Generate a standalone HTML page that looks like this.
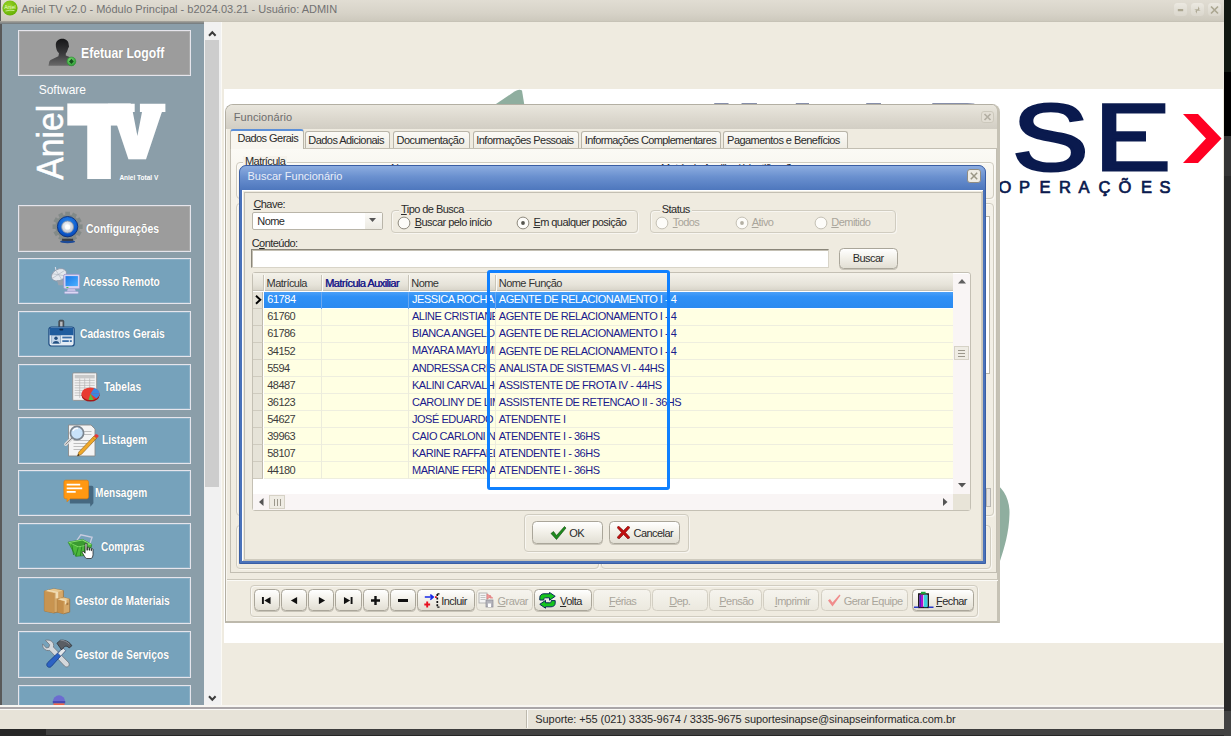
<!DOCTYPE html>
<html lang="pt-BR"><head><meta charset="utf-8"><title>Aniel TV v2.0 - Módulo Principal</title>
<style>
html,body{margin:0;padding:0;background:#2b2b2b;}
body{width:1231px;height:736px;overflow:hidden;position:relative;font-family:"Liberation Sans",sans-serif;}
#root{position:absolute;left:0;top:0;width:1231px;height:736px;overflow:hidden;background:#2a2a2a;}
#root div,#root span,#root svg{position:absolute;box-sizing:border-box;}
#root span.t{white-space:nowrap;line-height:1;}
/* generic text styles */
.ms{font:11px "Liberation Sans",sans-serif;letter-spacing:-0.55px;color:#2a2a2a;white-space:nowrap;line-height:13px;}
.sg{font:11px "Liberation Sans",sans-serif;white-space:nowrap;line-height:13px;}
u{text-decoration:underline;text-underline-offset:1px;}
/* title bar */
#tb{left:0;top:0;width:1224.2px;height:22px;background:linear-gradient(#e1ddd3 0,#d7d3c8 13px,#cdc9bd 21px,#c0bcb0 22px);}
#tbsh{left:0;top:21.3px;width:204px;height:2.7px;background:linear-gradient(#aaa69c,#70787d);}
#tb .sg{left:21.2px;top:4px;color:#727272;}
.wb{top:2.6px;width:12.8px;height:13.8px;border-radius:3.5px;background:linear-gradient(#ece9e1,#e2dfd6 50%,#dbd7cd);}
/* left edge */
#ledge{left:0;top:22px;width:2px;height:683px;background:#595959;}
#ledge0{left:0;top:0;width:1.2px;height:24px;background:#5c5c5c;}
/* sidebar */
#sb{left:2px;top:22px;width:202px;height:683px;background:#8b9ea9;overflow:hidden;}
.sbtn{border:1.6px solid #e6e5ec;background:#76a2bb;box-shadow:inset 0 0 0 1px rgba(255,255,255,.15);}
.sbtn.gray{background:#9c9c9c;}
.sbt{font:bold 12.5px "Liberation Sans",sans-serif;color:#fff;transform-origin:0 50%;text-shadow:0 0 1px rgba(70,70,70,.4);}
/* sidebar scroll */
#ss{left:204px;top:22px;width:17px;height:683px;background:#f1f1f1;}
#ss .th{left:1.2px;top:18px;width:13.8px;height:447px;background:#cdcdcd;}
/* main */
#main{left:221px;top:22px;width:1003px;height:683px;background:#efebe0;border-left:1px solid #fbfaf6;}
#white{left:224px;top:89px;width:999px;height:554px;background:#fff;overflow:hidden;}
/* status */
#st{left:0;top:705px;width:1224.2px;height:24px;background:linear-gradient(#f8f6f2 0,#f8f6f2 1.7px,#aaa6a8 2.1px,#aaa6a8 3.6px,#fbfaf7 3.9px,#fbfaf7 4.7px,#e7e3d8 5px);}
#st .sep{left:526px;top:5px;width:1px;height:18px;background:#bdb9ad;box-shadow:1px 0 0 #fbfaf6;}
#st .sg{left:535.3px;top:8.8px;color:#2a2a2a;letter-spacing:-.08px;}
/* windows */
.win{left:0;top:0;width:1231px;height:736px;}
#fw{background:#efebe0;border-radius:8px 8px 0 0;border:1px solid #b3afa3;border-right:3px solid #c6c2b5;border-bottom:2px solid #bdb9ac;box-shadow:inset 1px 1px 0 #f8f6f0;overflow:hidden;}
#fw .tt{left:0;top:0;width:100%;height:24px;background:linear-gradient(#e9e6dd,#dcd8ce 55%,#d2cec4);}
.tab{border:1px solid #b9b5a9;border-bottom:none;border-radius:3px 3px 0 0;background:linear-gradient(#fbfaf6,#efece3);}
.tab.on{background:#f8f6f0;border-top:2px solid #5b8fd8;}
#tp{background:linear-gradient(#fbfaf5,#f4f1e9 12%,#efebe0 100%);border:1px solid #c2beb2;}
.gb{border:1px solid #d0ccc0;border-radius:4px;box-shadow:inset 1px 1px 0 rgba(255,255,255,.55),1px 1px 0 rgba(255,255,255,.55);}
.btn{border:1px solid #aaa69a;border-radius:4.5px;background:linear-gradient(#ffffff,#f3f1ea 45%,#e2dfd4);box-shadow:0 1px 0 #c8c4b8;}
.btn.dis{border-color:#d3cfc3;background:linear-gradient(#f6f4ee,#ece9df);box-shadow:none;}
.ms.dt{color:#a9a59b;}
.ms.w{color:#fff;letter-spacing:-0.47px;}
.ms.nv{color:#1a1a8c;letter-spacing:-0.47px;}
/* Buscar dialog */
#bw{background:#4a72ba;border-radius:7px 7px 0 0;overflow:hidden;border:1px solid #3a5ea4;}
#bw .tt{left:0;top:0;width:100%;height:24px;background:linear-gradient(#8dade0,#6a90cf 45%,#4e77bd);}
#bw .cl{left:2px;top:24px;right:2px;bottom:2px;background:#efebe0;box-shadow:inset 1px 1px 0 #fff,inset -1px -1px 0 #c9c5b9;}
.combo{background:#fff;border:1px solid #b9b5a9;border-radius:2px;}
.combo .dd{right:0;top:0;width:17px;height:100%;background:linear-gradient(#fbfaf7,#eceae2);}
.edit{background:#fff;border:1px solid #8a867a;border-right-color:#d8d4c8;border-bottom-color:#d8d4c8;box-shadow:inset 1px 1px 0 #c4c0b4;}
#grid{background:#fff;border:1px solid #c4c0b4;border-radius:3px;}
.gh{background:linear-gradient(#f4f2ea,#e6e3d9 70%,#d9d5ca);border-bottom:1px solid #c4c0b4;}
.gi{background:#e6e3d8;border-bottom:1px solid #cfcbbf;border-right:1px solid #bdb9ad;}
.gr{background:#ffffe3;border-bottom:1px solid #eeeedf;}
.gr.sel{background:linear-gradient(#4ba0f8,#2f90f6 30%,#2b8af0);border-bottom-color:#fff;}
.clip{overflow:hidden;}
.sc{background:#f9f5f5;}
.sth{background:#efece4;border:1px solid #d6d2c6;}

</style></head><body>
<div id="root">
<div id="tb">
<svg style="left:2px;top:.4px" width="16" height="16" viewBox="0 0 16 16"><defs><radialGradient id="gi" cx=".4" cy=".35" r=".7"><stop offset="0" stop-color="#9ad428"/><stop offset="1" stop-color="#62ae02"/></radialGradient></defs><circle cx="8" cy="8" r="7.6" fill="url(#gi)"/><text x="8" y="8.6" font-family="Liberation Sans,sans-serif" font-size="5.2" fill="#eaffd0" text-anchor="middle">Aniel</text><path d="M3.5 11 Q8 9.6 12.5 10.6" stroke="#d8f5a8" stroke-width=".8" fill="none"/></svg>
<span class="t sg">Aniel TV v2.0 - Módulo Principal - b2024.03.21 - Usuário: ADMIN</span>
<div class="wb" style="left:1174.100px"><svg width="13" height="14" viewBox="0 0 13 14" style="left:0;top:0"><rect x="3.800" y="5.900" width="5.400" height="2.300" rx=".5" fill="#aca792"/></svg></div>
<div class="wb" style="left:1190.900px"><svg width="13" height="14" viewBox="0 0 13 14" style="left:0;top:0"><path d="M7.500 3.200 L8.600 6.300 L6.800 7 Z M5.500 10.800 L4.400 7.700 L6.200 7 Z M3.200 6.600 L6.500 6.200 L6.500 7.800 Z M9.800 7.400 L6.500 7.800 L6.500 6.200 Z" fill="#aca792"/></svg></div>
<div class="wb" style="left:1207.900px"><svg width="13" height="14" viewBox="0 0 13 14" style="left:0;top:0"><path d="M3 3.500 L10 10.500 M10 3.500 L3 10.500" stroke="#aca792" stroke-width="1.700"/></svg></div>
</div>
<div id="ledge"></div><div id="ledge0"></div>

<div id="sb"></div>
<div class="sbtn gray" style="left:17.7px;top:29.5px;width:173.6px;height:46.7px"></div>
<span class="t sbt" style="left:81px;top:45.65px;font-size:14px;transform:scaleX(0.871)">Efetuar Logoff</span>
<div class="sbtn gray" style="left:17.7px;top:205px;width:173.6px;height:46.5px"></div>
<span class="t sbt" style="left:85.5px;top:223.12px;font-size:12.5px;transform:scaleX(0.835)">Configurações</span>
<div class="sbtn" style="left:17.7px;top:258.2px;width:173.6px;height:46.1px"></div>
<span class="t sbt" style="left:82.8px;top:276.02px;font-size:12.5px;transform:scaleX(0.813)">Acesso Remoto</span>
<div class="sbtn" style="left:17.7px;top:310.8px;width:173.6px;height:46.4px"></div>
<span class="t sbt" style="left:79.8px;top:328.22px;font-size:12.5px;transform:scaleX(0.819)">Cadastros Gerais</span>
<div class="sbtn" style="left:17.7px;top:363.8px;width:173.6px;height:46.7px"></div>
<span class="t sbt" style="left:103.5px;top:381.12px;font-size:12.5px;transform:scaleX(0.813)">Tabelas</span>
<div class="sbtn" style="left:17.7px;top:417px;width:173.6px;height:46.5px"></div>
<span class="t sbt" style="left:102px;top:434.22px;font-size:12.5px;transform:scaleX(0.820)">Listagem</span>
<div class="sbtn" style="left:17.7px;top:469.8px;width:173.6px;height:46.2px"></div>
<span class="t sbt" style="left:95.4px;top:486.92px;font-size:12.5px;transform:scaleX(0.808)">Mensagem</span>
<div class="sbtn" style="left:17.7px;top:523.2px;width:173.6px;height:46.3px"></div>
<span class="t sbt" style="left:100.9px;top:541.02px;font-size:12.5px;transform:scaleX(0.801)">Compras</span>
<div class="sbtn" style="left:17.7px;top:577px;width:173.6px;height:47px"></div>
<span class="t sbt" style="left:75.2px;top:594.62px;font-size:12.5px;transform:scaleX(0.817)">Gestor de Materiais</span>
<div class="sbtn" style="left:17.7px;top:631px;width:173.6px;height:47px"></div>
<span class="t sbt" style="left:75px;top:649.02px;font-size:12.5px;transform:scaleX(0.825)">Gestor de Serviços</span>
<div class="sbtn" style="left:17.7px;top:685px;width:173.6px;height:21px;border-bottom:none"></div>
<svg id="sbi" style="left:0;top:22px" width="204" height="683" viewBox="0 22 204 683"><defs>
<linearGradient id="pg" x1="0" y1="0" x2="0" y2="1"><stop offset="0" stop-color="#151517"/><stop offset=".55" stop-color="#3a3a3c"/><stop offset="1" stop-color="#6a6a6a"/></linearGradient>
<radialGradient id="gg" cx=".4" cy=".35" r=".7"><stop offset="0" stop-color="#7ad870"/><stop offset="1" stop-color="#2a9a34"/></radialGradient>
<radialGradient id="cb" cx=".5" cy=".35" r=".75"><stop offset="0" stop-color="#2a8cf0"/><stop offset=".7" stop-color="#0a55c8"/><stop offset="1" stop-color="#083a90"/></radialGradient>
<radialGradient id="kn" cx=".45" cy=".4" r=".6"><stop offset="0" stop-color="#ffffff"/><stop offset="1" stop-color="#b8c0cc"/></radialGradient>
<linearGradient id="scr" x1="0" y1="0" x2="1" y2="1"><stop offset="0" stop-color="#1a78e8"/><stop offset="1" stop-color="#4ab0ff"/></linearGradient>
</defs>
<!-- logoff person -->
<g transform="translate(48,38)">
<path d="M14.300 .8c3.800 0 6.400 2.400 6.400 6 0 .8.500 1 .3 1.800-.3 1.300-.9 1.500-1.200 2.800-.5 2-1.300 3.200-2 4v2l5 2.200c1.500.7 2.200 1.600 2.400 3.400l.6 4.800H.5l.6-3.300c.3-1.500 1-2.400 2.500-3.100l6.800-3.200.6-3c-1.300-1-2.300-2.600-2.700-4.700-.3-1.200-.5-2.400-.5-3.700C7.800 3.200 10.500.8 14.300.8z" fill="url(#pg)"/>
<circle cx="23.400" cy="23.400" r="4.400" fill="url(#gg)" stroke="#2a9030" stroke-width=".6"/><path d="M23.400 20.800l2.400 2.600-2.400 2.600-2.400-2.600z" fill="#14501c"/>
</g>
<!-- config gear -->
<g transform="translate(67.600,226.700)">
<g fill="#7e8684" opacity=".8"><circle r="12.300"/><g><rect x="-2.300" y="-15" width="4.600" height="30"/><rect x="-2.300" y="-15" width="4.600" height="30" transform="rotate(30)"/><rect x="-2.300" y="-15" width="4.600" height="30" transform="rotate(60)"/><rect x="-2.300" y="-15" width="4.600" height="30" transform="rotate(90)"/><rect x="-2.300" y="-15" width="4.600" height="30" transform="rotate(120)"/><rect x="-2.300" y="-15" width="4.600" height="30" transform="rotate(150)"/></g></g>
<ellipse cx="0" cy="15" rx="7.500" ry="1.600" fill="#1c4a98"/><rect x="-5.500" y="12" width="11" height="2.200" fill="#3a3e44"/>
<circle r="10.200" fill="url(#cb)" stroke="#0a2f78" stroke-width=".9"/>
<circle cy=".3" r="6" fill="url(#kn)" stroke="#8a94a4" stroke-width=".8"/><circle cy=".3" r="2.600" fill="#fff" opacity=".9"/>
</g>
<!-- acesso remoto -->
<g transform="translate(50.900,266.800)">
<path d="M4.400 .2l.8 4" stroke="#e8e8f0" stroke-width=".9"/>
<ellipse cx="8.100" cy="8" rx="8" ry="5.600" fill="#e4e8ee" stroke="#8e98a8" stroke-width=".8" transform="rotate(-28 8.100 8)"/>
<path d="M1.500 11.500L14 3.500M5 3.500l6 9.500M2 7l12 2" stroke="#a8b0bc" stroke-width=".6" fill="none"/>
<path d="M6 13.500h8l-1.500 5h-5z" fill="#9aa2ae"/>
<rect x="12.800" y="7.500" width="16" height="14.500" rx="1.500" fill="#d8d4f2" stroke="#9a96c8" stroke-width=".8"/>
<rect x="14.600" y="9.300" width="12.400" height="10" fill="url(#scr)"/>
<path d="M17 22h7l1 3h-9z" fill="#c4c0e4"/><rect x="13.500" y="24.700" width="14" height="2.300" rx="1" fill="#dcd8f4" stroke="#9a96c8" stroke-width=".5"/>
<rect x="15.500" y="20.200" width="2" height=".9" fill="#40c040"/>
</g>
<!-- cadastros badge -->
<g transform="translate(48.300,320.200)">
<rect x="10.500" y="0" width="5" height="11" rx="1.300" fill="#55595e" stroke="#2c2e32" stroke-width=".6"/><rect x="11.800" y="1.500" width="2.400" height="5" fill="#b8bcc2"/>
<rect x=".6" y="6.800" width="25.300" height="19" rx="2.600" fill="#e4ecf4" stroke="#1b4a80" stroke-width="1.200"/>
<path d="M1.200 9.400a2 2 0 0 1 2-2h20a2 2 0 0 1 2 2v5.600H1.200z" fill="#1f5c9e"/>
<rect x="11" y="8.600" width="4" height="1.600" rx=".8" fill="#0c2a50"/>
<rect x="3.500" y="15.300" width="8.500" height="8.200" fill="#c4d6ea" stroke="#5a80a8" stroke-width=".5"/><circle cx="7.700" cy="18" r="1.700" fill="#234f80"/><path d="M4.600 23.300c0-3.200 6.200-3.200 6.200 0z" fill="#234f80"/>
<rect x="14" y="16.400" width="9.500" height="1.800" fill="#3a6ea8"/><rect x="14" y="20" width="6.500" height="1.800" fill="#3a6ea8"/><rect x="21.500" y="20" width="2" height="1.800" fill="#3a6ea8"/>
</g>
<!-- tabelas -->
<g transform="translate(72.200,372.400)">
<rect x=".5" y=".5" width="24" height="27.500" rx="1" fill="#f2f2f2" stroke="#8e8e8e" stroke-width=".9"/>
<rect x="2.500" y="2.500" width="20" height="3.500" fill="#c8c8c8"/>
<path d="M2.500 8h20M2.500 10.500h20M2.500 13h20M2.500 15.500h20M2.500 18h20M2.500 20.500h20M2.500 23h20M7.500 6v19.500M12.500 6v19.500M17.500 6v19.500" stroke="#b4b4b4" stroke-width=".7"/>
<ellipse cx="18.300" cy="22.800" rx="9" ry="6.300" fill="#a01818"/>
<ellipse cx="18.300" cy="21.400" rx="9" ry="6.300" fill="#e83a30"/>
<path d="M18.300 21.400L22 15.700A9 6.300 0 0 1 27.300 21.400z" fill="#3a88e0"/>
<path d="M18.300 21.400h9a9 6.300 0 0 1-3 4.700z" fill="#3a88e0"/>
<path d="M18.300 21.400l3 6a9 6.300 0 0 1-5 .1z" fill="#58c040"/>
</g>
<!-- listagem -->
<g transform="translate(64.500,422.500)">
<path d="M4 2.500h22.500l4 4V33.500H4z" fill="#f4f4f4" stroke="#8a8a8a" stroke-width=".9"/>
<path d="M16 9h11M16 12h11M9 18h18M9 21h18M9 24h14M9 27h10" stroke="#b8b8b8" stroke-width=".9"/>
<path d="M7.500 15.500L1.200 21.800" stroke="#d8d8d8" stroke-width="3.200" stroke-linecap="round"/><path d="M7.500 15.500L1.200 21.800" stroke="#8a8a8a" stroke-width="1" stroke-linecap="round"/>
<circle cx="12.500" cy="10.500" r="6.600" fill="#c4e0fa" fill-opacity=".9" stroke="#7a848e" stroke-width="1.700"/><path d="M8.500 8.500a4.500 4.500 0 0 1 5-2.500" stroke="#fff" stroke-width="1.300" fill="none"/>
<path d="M29.500 13.500l2.800 2L17 31.800l-4 1.700 1.300-4z" fill="#f0a828" stroke="#8a5a14" stroke-width=".6"/><path d="M28 15.300l2.600 2" stroke="#c88010" stroke-width=".6"/>
<path d="M29.500 13.500l1.300-1.400c.5-.5 1.300-.6 1.900-.2l.9.700c.6.400.6 1.300.2 1.800l-1.500 1.100z" fill="#e83838"/>
<path d="M13 33.500l.7-2 1.300 1.300z" fill="#222"/>
</g>
<!-- mensagem -->
<g transform="translate(63.900,480.200)">
<path d="M6 5.500h22a1.500 1.500 0 0 1 1.500 1.500v16l-3 3.500-.3-3.300H6z" fill="#466880"/>
<path d="M1.800 0h21a1.800 1.800 0 0 1 1.800 1.800v15a1.800 1.800 0 0 1-1.800 1.800H6.500L3 21.500l.3-2.900H1.800A1.800 1.800 0 0 1 0 16.800v-15A1.800 1.800 0 0 1 1.800 0z" fill="#ff9812" stroke="#e07800" stroke-width=".6"/>
<path d="M2.800 4.500h13.500M2.800 8.100h15.500M2.800 11.600h9" stroke="#fff" stroke-width="1.700"/>
</g>
<!-- compras -->
<g transform="translate(67.800,533)">
<path d="M8 9L13 1.800l11.300 2.500L22 11" fill="none" stroke="#c8cce0" stroke-width="1.300"/>
<path d="M.3 9.200L15 6.500l9 5-2.500 10.800-13.500 1z" fill="#4cb83a" stroke="#2a8a26" stroke-width=".7"/>
<path d="M.3 9.200L15 6.500l9 5-13.500 2.800z" fill="#8ae070"/>
<path d="M2.300 9.800L14.600 7.600l6.500 3.700-10.400 2.200z" fill="#3a9a30"/>
<path d="M10.500 14.300L8 23.300M4 11.500l1.800 10.500M14 13.500l-1.500 9.500M17.500 12.800l-1.200 9.500" stroke="#1f7a1f" stroke-width=".8" fill="none"/>
<path d="M17.300 10.800c0-.9 1.800-.9 1.800 0v6.500l.5-.1v-2.400c0-.8 1.600-.8 1.600 0v2.400l.5.100v-1.900c0-.8 1.600-.8 1.600 0v2.200l.4.100v-1.300c0-.8 1.500-.8 1.500 0v5.100c0 2-1 4-2 4h-4.200c-1 0-1.600-1-2.200-2l-2.300-3.800c-.5-.8.700-1.700 1.400-1l1.400 1.500z" fill="#fff" stroke="#111" stroke-width=".7"/>
</g>
<!-- gestor de materiais -->
<g transform="translate(43.900,588.500)">
<path d="M.5 2.500L10 .3l9.500 1.800V22L10 24.500.5 22.500z" fill="#d6a868" stroke="#9a6c34" stroke-width=".7"/>
<path d="M.5 2.500L10 4.500l9.500-2.400L10 .3z" fill="#e8c890"/>
<path d="M10 4.500v20" stroke="#9a6c34" stroke-width=".6"/>
<path d="M.5 2.500L10 4.500V24.500L.5 22.500z" fill="#c89450"/>
<path d="M4.500 1.300l9.800 2.100v6l-2.600.7V4.200L2.500 1.900z" fill="#f0dcb4"/>
<path d="M13.500 10.800l6.300-1.700 6 1.500v13l-6 1.700-6.300-1.600z" fill="#d6a868" stroke="#9a6c34" stroke-width=".7"/>
<path d="M13.500 10.800l6.300 1.600v12.900l-6.300-1.600z" fill="#c48e4a"/>
<path d="M13.500 10.800l6.300 1.600 6-1.800-6-1.500z" fill="#e8c890"/>
<path d="M16.300 10l6.300 1.500v4l-1.600.5v-3.600l-6.200-1.600z" fill="#f0dcb4"/>
<rect x="22.500" y="20.500" width="2" height="2.300" fill="#8a5a28" transform="skewY(-15)" opacity=".6"/>
</g>
<!-- gestor de servicos -->
<g transform="translate(43.400,639.700)">
<path d="M2 .6L6.200 5l-.7 2.600-2.500.7L-.8 4.200C-1.200 7 .2 9.600 3 10.600c1.200.4 2.400.4 3.300.1l14.800 15.600c1.200 1.200 3 1.200 4 .2 1-1 1-2.800-.2-4L10 7.300c.4-1 .4-2.100 0-3.300C9 1.200 5.500-.3 2 .6z" fill="#d4d8dc" stroke="#6c747c" stroke-width=".8"/>
<path d="M19.500 8.300l2.700 2.600L8 26.700c-1.100 1.200-2.900 1.200-3.900.2-1-1-1-2.700.1-3.900z" fill="#2c62c4" stroke="#143c84" stroke-width=".8"/>
<path d="M19.500 8.300l2.700 2.600-4.800 5.400-2.800-2.700z" fill="#e4e8ec" stroke="#6c747c" stroke-width=".6"/>
<path d="M13.500 3.500L17 .5C21 0 25.500 1.500 28.500 6l-2.700 2.300c-1.400-1.700-3-2.300-4.600-1.500l-3 3.400z" fill="#5a5e64" stroke="#26282c" stroke-width=".7"/>
<path d="M17 .5c3.500 0 7 1.500 9 4" stroke="#9aa0a8" stroke-width=".8" fill="none"/>
</g>
<!-- last partial -->
<g transform="translate(52.500,695.500)">
<path d="M.3 6.500a6 6.500 0 0 1 12.400 0z" fill="#6c6cd0"/><rect x=".3" y="5.600" width="12.400" height="2.300" fill="#4848b0"/><rect x="1" y="7.900" width="11" height="3" fill="#ee6048"/>
</g>
<g fill="#fff" font-family="Liberation Sans, sans-serif">
<text x="38.700" y="93.700" font-size="12">Software</text>
<text transform="translate(62.900,179.800) rotate(-90)" font-size="37.800" stroke="#fff" stroke-width=".5" textLength="75" lengthAdjust="spacingAndGlyphs">Aniel</text>
<text id="lgTV" transform="scale(.9,1)" font-family="DejaVu Sans, Liberation Sans, sans-serif" font-weight="bold" stroke="#fff" stroke-linejoin="miter"><tspan x="78.780" y="174.200" font-size="91.400" stroke-width="9">T</tspan><tspan x="126.900" y="155.600" font-size="66" stroke-width="6.700">V</tspan></text>
<path d="M112 103.700H165.400V111.900H161.500L141 150H133L117.100 124.300H108V103.700z"/>
<path d="M134.700 103H139.900V111.900H142L137.400 135.900L132.800 111.900H134.700z" fill="#8b9ea9"/>
<text x="119.400" y="179.600" font-size="6.500" font-weight="bold">Aniel Total V</text>
</g>
</svg><div id="ss">
 <svg style="left:4.300px;top:7.500px" width="9" height="7" viewBox="0 0 9 7"><path d="M1 5.800 L4.300 2.200 L7.600 5.800" fill="none" stroke="#3c3c3c" stroke-width="2"/></svg>
 <div class="th"></div>
 <svg style="left:4.300px;top:672.500px" width="9" height="7" viewBox="0 0 9 7"><path d="M1 1.200 L4.300 4.800 L7.600 1.200" fill="none" stroke="#3c3c3c" stroke-width="2"/></svg>
</div>
<div id="tbsh"></div>

<div id="main"></div>
<div id="white"></div>
<svg id="logo" style="left:0;top:0" width="1231" height="736" viewBox="0 0 1231 736">
 <path d="M493 106 L514.500 91.500 Q519 88.500 522 90.500 L524.500 106 Z" fill="#8fae9f"/>
 <path d="M990 480 C1003 486 1010 499 1009.500 514 C1009 533 1004 549 1000 561 L990 566 Z" fill="#8fae9f"/>
 <g font-family="Liberation Sans, sans-serif" fill="#0a1a4e">
  <text id="sinapse" transform="translate(0,169.500) scale(1.21,1)" x="520.700 583 606.700 690.300 764.200 836.500 904.500" y="6 0 0 0 0 0 0" font-size="94.500" stroke="#0a1a4e" stroke-width="3">SINAPSE</text>
  <text id="oper" x="998.500 1019 1039.500 1059 1078.500 1098.500 1118.500 1141 1159.500" y="193" font-size="16.500" stroke="#0a1a4e" stroke-width=".7">OPERAÇÕES</text>
 </g>
 <rect x="1146" y="122" width="24" height="28" fill="#fff"/>
 <path d="M1183 114 H1198 L1221.500 138.500 L1198 163 H1183 L1206 138.500 Z" fill="#ff0022"/>
</svg>

<div class="win" id="fwin">
<div id="fw" style="left:225.3px;top:104.3px;width:775px;height:519px;"><div class="tt"></div></div>
<span class="t sg" style="left:233.7px;top:111.5px;color:#6d6d6d;letter-spacing:.1px">Funcionário</span>
<svg style="left:981.2px;top:110.5px;" width="13" height="12" viewBox="0 0 13 12"><rect x=".5" y=".5" width="12" height="11" rx="2.5" fill="#e2ded4" stroke="#ccc8bc"/><path d="M3.5 3 L9.5 9 M9.5 3 L3.5 9" stroke="#b3afa3" stroke-width="1.7"/></svg>
<div id="tp" style="left:229.5px;top:147.5px;width:767px;height:425px;"></div>
<div class="gb" style="left:235.8px;top:161.5px;width:758.7px;height:37px;"></div>
<span class="t ms" style="left:245px;top:155.9px;background:#f6f3ec;padding:0 2px;margin-left:-2px">Matrícula</span>
<span class="t ms" style="left:391px;top:163px;color:#333">Nome</span>
<span class="t ms" style="left:661px;top:163px;color:#333">Matrícula Auxiliar / Identificação</span>
<div class="gb" style="left:235.8px;top:202.7px;width:758.7px;height:313.3px;"></div>
<div style="left:984px;top:215.5px;width:5.5px;height:158.5px;background:#fff;border:1px solid #b9b5a9;border-left:none"></div>
<div class="gb" style="left:235.8px;top:525px;width:363.2px;height:44px;"></div>
<div class="gb" style="left:601px;top:525px;width:390px;height:44px;"></div>
<div style="left:985.5px;top:487.5px;width:5.5px;height:19px;background:#e4e2e0;border:1px solid #b9b7b3"></div>
<div class="tab on" style="left:229.5px;top:129px;width:74.8px;height:20px;"></div>
<span class="t ms" style="left:237.5px;top:132.7px;">Dados Gerais</span>
<div class="tab" style="left:304.5px;top:131.3px;width:85.5px;height:16.3px;"></div>
<span class="t ms" style="left:308.3px;top:134.7px;">Dados Adicionais</span>
<div class="tab" style="left:392.8px;top:131.3px;width:77.5px;height:16.3px;"></div>
<span class="t ms" style="left:396.6px;top:134.7px;">Documentação</span>
<div class="tab" style="left:472.5px;top:131.3px;width:106.3px;height:16.3px;"></div>
<span class="t ms" style="left:476.3px;top:134.7px;">Informações Pessoais</span>
<div class="tab" style="left:581px;top:131.3px;width:140.3px;height:16.3px;"></div>
<span class="t ms" style="left:584.8px;top:134.7px;letter-spacing:-0.62px">Informações Complementares</span>
<div class="tab" style="left:723.3px;top:131.3px;width:124.5px;height:16.3px;"></div>
<span class="t ms" style="left:727.1px;top:134.7px;">Pagamentos e Benefícios</span>
<div style="left:227px;top:579.3px;width:771px;height:1px;background:#cbc7bb;box-shadow:0 1px 0 #fbfaf6"></div>
<div class="gb" style="left:249.5px;top:584.5px;width:728.2px;height:32.2px;"></div>
<div class="btn" style="left:253.5px;top:589.2px;width:26.5px;height:21.8px;"></div>
<svg style="left:261px;top:596.7px;" width="10.5" height="7.2" viewBox="0 0 11 9" preserveAspectRatio="none"><path d="M1 0h2v9H1zM10 0v9L3.5 4.500z" fill="#111"/></svg>
<div class="btn" style="left:281px;top:589.2px;width:26.3px;height:21.8px;"></div>
<svg style="left:289.5px;top:596.7px;" width="8" height="7.2" viewBox="0 0 9 9" preserveAspectRatio="none"><path d="M8 0v9L1 4.500z" fill="#111"/></svg>
<div class="btn" style="left:308.3px;top:589.2px;width:26px;height:21.8px;"></div>
<svg style="left:317.5px;top:596.7px;" width="8" height="7.2" viewBox="0 0 9 9" preserveAspectRatio="none"><path d="M1 0v9L8 4.500z" fill="#111"/></svg>
<div class="btn" style="left:335.3px;top:589.2px;width:26.4px;height:21.8px;"></div>
<svg style="left:343.3px;top:596.7px;" width="10.5" height="7.2" viewBox="0 0 11 9" preserveAspectRatio="none"><path d="M8 0h2v9H8zM1 0v9L7.500 4.500z" fill="#111"/></svg>
<div class="btn" style="left:362.7px;top:589.2px;width:26.3px;height:21.8px;"></div>
<svg style="left:371.3px;top:595.7px;" width="9" height="9" viewBox="0 0 9 9"><path d="M3.3 0h2.400v3.300H9v2.400H5.700V9H3.300V5.700H0V3.300h3.300z" fill="#111"/></svg>
<div class="btn" style="left:390px;top:589.2px;width:26.3px;height:21.8px;"></div>
<svg style="left:398.3px;top:598.7px;" width="10" height="3" viewBox="0 0 10 3"><rect width="10" height="3" fill="#111"/></svg>
<div class="btn" style="left:417.3px;top:589.2px;width:57.7px;height:21.8px;"></div>
<svg style="left:424px;top:592.5px;" width="16" height="15" viewBox="0 0 16 15"><path d="M.8 4.100h8M6.300 1.600l3 2.500-3 2.500" stroke="#1428e8" stroke-width="1.500" fill="none"/><rect x="11" y="3.200" width="1.800" height="1.800" fill="#e81020"/><path d="M3.200 8.600v5.800M.3 11.500h5.800" stroke="#e81020" stroke-width="1.900"/><path d="M13.300 1.100v13" stroke="#111" stroke-width="1.700" stroke-dasharray="2 1.400"/><path d="M13.300 .9h2.200M13.300 14.100h2.200" stroke="#111" stroke-width="1.300"/></svg>
<span class="t ms" style="left:441.3px;top:595.5px;">Incluir</span>
<div class="btn dis" style="left:476px;top:589.2px;width:57.3px;height:21.8px;"></div>
<svg style="left:478px;top:591.5px;" width="16" height="16" viewBox="0 0 16 16"><rect x="1" y="1" width="8" height="10" fill="#f4f4f4" stroke="#a8a8a8" stroke-width=".8"/><path d="M2.500 3.500h5M2.500 5.500h5M2.500 7.500h5" stroke="#b8b8b8" stroke-width=".8"/><rect x="8" y="8" width="7" height="7" fill="#b4b4bc" stroke="#8c8c94" stroke-width=".7"/><rect x="10" y="11.500" width="3" height="3.500" fill="#fff"/><path d="M9 2l4 2.500-4 2.500z M12 3v3h3" fill="#f09a9a" stroke="#e08080" stroke-width=".8"/></svg>
<span class="t ms dt" style="left:497.5px;top:595.5px;"><u>G</u>ravar</span>
<div class="btn" style="left:534.3px;top:589.2px;width:57.4px;height:21.8px;"></div>
<svg style="left:539.3px;top:592px;" width="17" height="17" viewBox="0 0 17 17"><g fill="#14c41c" stroke="#0a2a5a" stroke-width="1" stroke-linejoin="round"><path id="va" d="M.8 8V5.500C.8 3 2.800 1.800 5 1.800h5.500V.4L16.200 4.300 10.500 8.200V5.800H6.300C5.300 5.800 4.800 6.300 4.800 7.300V8z"/><path d="M.8 8V5.500C.8 3 2.800 1.800 5 1.800h5.500V.4L16.200 4.300 10.500 8.200V5.800H6.300C5.300 5.800 4.800 6.300 4.800 7.300V8z" transform="rotate(180 8.500 8.300)"/></g></svg>
<span class="t ms" style="left:560px;top:595.5px;"><u>V</u>olta</span>
<div class="btn dis" style="left:592.7px;top:589.2px;width:58px;height:21.8px;"></div>
<span class="t ms dt" style="left:609px;top:595.5px;"><u>F</u>érias</span>
<div class="btn dis" style="left:651.7px;top:589.2px;width:56.6px;height:21.8px;"></div>
<span class="t ms dt" style="left:669.3px;top:595.5px;"><u>D</u>ep.</span>
<div class="btn dis" style="left:709.3px;top:589.2px;width:52.4px;height:21.8px;"></div>
<span class="t ms dt" style="left:719.3px;top:595.5px;"><u>P</u>ensão</span>
<div class="btn dis" style="left:762.7px;top:589.2px;width:56.6px;height:21.8px;"></div>
<span class="t ms dt" style="left:774.7px;top:595.5px;"><u>I</u>mprimir</span>
<div class="btn dis" style="left:820.7px;top:589.2px;width:87.6px;height:21.8px;"></div>
<svg style="left:826.5px;top:593.5px;" width="14" height="13" viewBox="0 0 14 13"><path d="M1 6.500l2-1.500 2.500 3.500L12.500.500l1 1L5.500 12.500z" fill="#f08c8c"/></svg>
<span class="t ms dt" style="left:843.7px;top:595.5px;">Gerar Equipe</span>
<div class="btn" style="left:911.7px;top:589.2px;width:62.3px;height:21.8px;"></div>
<svg style="left:913.5px;top:590.5px;" width="20" height="18" viewBox="0 0 20 18"><rect x="4.800" y="3" width="9.400" height="13.400" fill="#f4f4f4" stroke="#111" stroke-width="1.500"/><rect x="7" y=".8" width="4.600" height="2" fill="#18a838"/><rect x="5.600" y="3.800" width="3.600" height="12.400" fill="#b010c8"/><rect x="5.600" y="3.800" width="1.300" height="12.400" fill="#3828c8"/><rect x="9.800" y="3.800" width="3.600" height="12.400" fill="#38d0e0"/><path d="M0 16.300h4.500M14.500 16.300h5" stroke="#2838c8" stroke-width="1.500"/></svg>
<span class="t ms" style="left:936px;top:595.5px;"><u>F</u>echar</span>
</div>
<div class="win" id="bwin">
<div id="bw" style="left:239px;top:164.7px;width:747px;height:399.3px;"><div class="tt"></div><div class="cl"></div></div>
<div style="left:243.5px;top:191.6px;width:738.5px;height:368.4px;border:1px solid #c3bfb3;border-right-color:#cfcbbf;border-bottom-color:#cfcbbf"></div>
<span class="t sg" style="left:247.5px;top:171.2px;color:#e9eef8">Buscar Funcionário</span>
<svg style="left:966.7px;top:169.3px;" width="14" height="14" viewBox="0 0 14 14"><rect x=".5" y=".5" width="13" height="13" rx="2.500" fill="#efece4" stroke="#8f8c84"/><path d="M3.800 3.800 L10.200 10.200 M10.200 3.800 L3.800 10.200" stroke="#9a9686" stroke-width="1.500"/></svg>
<span class="t ms" style="left:253.4px;top:198.7px;"><u>C</u>have:</span>
<div class="combo" style="left:252px;top:212.2px;width:130.7px;height:17.5px;"><div class="dd"></div></div>
<svg style="left:368.8px;top:218.3px;" width="7" height="4" viewBox="0 0 7 4"><path d="M0 0h7L3.500 4z" fill="#555"/></svg>
<span class="t ms" style="left:257.3px;top:215.8px;">Nome</span>
<div class="gb" style="left:391px;top:210px;width:247.3px;height:22.8px;"></div>
<span class="t ms" style="left:401px;top:204.2px;background:#efebe0;padding:0 2px;margin-left:-2px"><u>T</u>ipo de Busca</span>
<svg style="left:397px;top:215.8px;" width="14" height="14" viewBox="0 0 14 14"><circle cx="7" cy="7" r="5.900" fill="#fdfcf9" stroke="#8e8a7e" stroke-width="1"/></svg>
<span class="t ms" style="left:414.7px;top:216.7px;"><u>B</u>uscar pelo início</span>
<svg style="left:515.8px;top:215.8px;" width="14" height="14" viewBox="0 0 14 14"><circle cx="7" cy="7" r="5.900" fill="#fdfcf9" stroke="#8e8a7e" stroke-width="1"/><circle cx="7" cy="7" r="1.900" fill="#55554e"/></svg>
<span class="t ms" style="left:533.4px;top:216.7px;"><u>E</u>m qualquer posição</span>
<div class="gb" style="left:649.5px;top:210px;width:246.8px;height:22.8px;"></div>
<span class="t ms" style="left:661.8px;top:204.2px;background:#efebe0;padding:0 2px;margin-left:-2px">Status</span>
<svg style="left:655.2px;top:215.8px;" width="14" height="14" viewBox="0 0 14 14"><circle cx="7" cy="7" r="5.900" fill="#fdfcf9" stroke="#c4c0b4" stroke-width="1"/></svg>
<span class="t ms dt" style="left:672.7px;top:216.7px;"><u>T</u>odos</span>
<svg style="left:734.8px;top:215.8px;" width="14" height="14" viewBox="0 0 14 14"><circle cx="7" cy="7" r="5.900" fill="#fdfcf9" stroke="#c4c0b4" stroke-width="1"/><circle cx="7" cy="7" r="1.900" fill="#b4b0a4"/></svg>
<span class="t ms dt" style="left:751.7px;top:216.7px;"><u>A</u>tivo</span>
<svg style="left:813.7px;top:215.8px;" width="14" height="14" viewBox="0 0 14 14"><circle cx="7" cy="7" r="5.900" fill="#fdfcf9" stroke="#c4c0b4" stroke-width="1"/></svg>
<span class="t ms dt" style="left:831.3px;top:216.7px;"><u>D</u>emitido</span>
<span class="t ms" style="left:251.7px;top:237.7px;">C<u>o</u>nteúdo:</span>
<div class="edit" style="left:251.2px;top:248.7px;width:577.6px;height:19.7px;"></div>
<div class="btn" style="left:838.5px;top:248.4px;width:59.8px;height:20.6px;"></div>
<span class="t ms" style="left:852.7px;top:253.4px;">Buscar</span>
<div id="grid" style="left:251.8px;top:272.4px;width:719.2px;height:238.6px;"></div>
<div class="gh" style="left:252.8px;top:273.4px;width:700.5px;height:17.9px;"></div>
<div style="left:262.5px;top:274.5px;width:1px;height:16.5px;background:#c9c5b9;box-shadow:1px 0 0 #fbfaf6"></div>
<div style="left:321.2px;top:274.5px;width:1px;height:16.5px;background:#c9c5b9;box-shadow:1px 0 0 #fbfaf6"></div>
<div style="left:408.2px;top:274.5px;width:1px;height:16.5px;background:#c9c5b9;box-shadow:1px 0 0 #fbfaf6"></div>
<div style="left:494.5px;top:274.5px;width:1px;height:16.5px;background:#c9c5b9;box-shadow:1px 0 0 #fbfaf6"></div>
<span class="t ms" style="left:266.6px;top:277.8px;color:#333">Matrícula</span>
<span class="t ms" style="left:325px;top:277.8px;color:#1c1c8a;text-shadow:.4px 0 0 #1c1c8a">Matrícula Auxiliar</span>
<span class="t ms" style="left:411.3px;top:277.8px;color:#333">Nome</span>
<span class="t ms" style="left:498.8px;top:277.8px;color:#333">Nome Função</span>
<div class="gi" style="left:252.8px;top:291.6px;width:10.7px;height:17.07px;"></div>
<div class="gr sel" style="left:263.5px;top:291.6px;width:689.8px;height:17.07px;"></div>
<div style="left:321.2px;top:291.6px;width:1px;height:17.07px;background:#6aa8f0"></div>
<div style="left:408.2px;top:291.6px;width:1px;height:17.07px;background:#6aa8f0"></div>
<div style="left:494.5px;top:291.6px;width:1px;height:17.07px;background:#6aa8f0"></div>
<span class="t ms w" style="left:267.3px;top:294.3px;">61784</span>
<div class="clip" style="left:411px;top:291.6px;width:83.5px;height:17.07px;"><span class="t ms w" style="left:1px;top:2.7px">JESSICA ROCHA</span></div>
<span class="t ms w" style="left:498.8px;top:294.3px;">AGENTE DE RELACIONAMENTO I - 4</span>
<div class="gi" style="left:252.8px;top:308.67px;width:10.7px;height:17.07px;"></div>
<div class="gr" style="left:263.5px;top:308.67px;width:689.8px;height:17.07px;"></div>
<div style="left:321.2px;top:308.67px;width:1px;height:17.07px;background:#ececdc"></div>
<div style="left:408.2px;top:308.67px;width:1px;height:17.07px;background:#ececdc"></div>
<div style="left:494.5px;top:308.67px;width:1px;height:17.07px;background:#ececdc"></div>
<span class="t ms" style="left:267.3px;top:311.37px;color:#3c3c3c">61760</span>
<div class="clip" style="left:411px;top:308.67px;width:83.5px;height:17.07px;"><span class="t ms nv" style="left:1px;top:2.7px">ALINE CRISTIANE</span></div>
<span class="t ms nv" style="left:498.8px;top:311.37px;">AGENTE DE RELACIONAMENTO I - 4</span>
<div class="gi" style="left:252.8px;top:325.74px;width:10.7px;height:17.07px;"></div>
<div class="gr" style="left:263.5px;top:325.74px;width:689.8px;height:17.07px;"></div>
<div style="left:321.2px;top:325.74px;width:1px;height:17.07px;background:#ececdc"></div>
<div style="left:408.2px;top:325.74px;width:1px;height:17.07px;background:#ececdc"></div>
<div style="left:494.5px;top:325.74px;width:1px;height:17.07px;background:#ececdc"></div>
<span class="t ms" style="left:267.3px;top:328.44px;color:#3c3c3c">61786</span>
<div class="clip" style="left:411px;top:325.74px;width:83.5px;height:17.07px;"><span class="t ms nv" style="left:1px;top:2.7px">BIANCA ANGELO</span></div>
<span class="t ms nv" style="left:498.8px;top:328.44px;">AGENTE DE RELACIONAMENTO I - 4</span>
<div class="gi" style="left:252.8px;top:342.81px;width:10.7px;height:17.07px;"></div>
<div class="gr" style="left:263.5px;top:342.81px;width:689.8px;height:17.07px;"></div>
<div style="left:321.2px;top:342.81px;width:1px;height:17.07px;background:#ececdc"></div>
<div style="left:408.2px;top:342.81px;width:1px;height:17.07px;background:#ececdc"></div>
<div style="left:494.5px;top:342.81px;width:1px;height:17.07px;background:#ececdc"></div>
<span class="t ms" style="left:267.3px;top:345.51px;color:#3c3c3c">34152</span>
<div class="clip" style="left:411px;top:342.81px;width:83.5px;height:17.07px;"><span class="t ms nv" style="left:1px;top:2.7px">MAYARA MAYUMI</span></div>
<span class="t ms nv" style="left:498.8px;top:345.51px;">AGENTE DE RELACIONAMENTO I - 4</span>
<div class="gi" style="left:252.8px;top:359.88px;width:10.7px;height:17.07px;"></div>
<div class="gr" style="left:263.5px;top:359.88px;width:689.8px;height:17.07px;"></div>
<div style="left:321.2px;top:359.88px;width:1px;height:17.07px;background:#ececdc"></div>
<div style="left:408.2px;top:359.88px;width:1px;height:17.07px;background:#ececdc"></div>
<div style="left:494.5px;top:359.88px;width:1px;height:17.07px;background:#ececdc"></div>
<span class="t ms" style="left:267.3px;top:362.58px;color:#3c3c3c">5594</span>
<div class="clip" style="left:411px;top:359.88px;width:83.5px;height:17.07px;"><span class="t ms nv" style="left:1px;top:2.7px">ANDRESSA CRIS</span></div>
<span class="t ms nv" style="left:498.8px;top:362.58px;">ANALISTA DE SISTEMAS VI - 44HS</span>
<div class="gi" style="left:252.8px;top:376.95px;width:10.7px;height:17.07px;"></div>
<div class="gr" style="left:263.5px;top:376.95px;width:689.8px;height:17.07px;"></div>
<div style="left:321.2px;top:376.95px;width:1px;height:17.07px;background:#ececdc"></div>
<div style="left:408.2px;top:376.95px;width:1px;height:17.07px;background:#ececdc"></div>
<div style="left:494.5px;top:376.95px;width:1px;height:17.07px;background:#ececdc"></div>
<span class="t ms" style="left:267.3px;top:379.65px;color:#3c3c3c">48487</span>
<div class="clip" style="left:411px;top:376.95px;width:83.5px;height:17.07px;"><span class="t ms nv" style="left:1px;top:2.7px">KALINI CARVALHO</span></div>
<span class="t ms nv" style="left:498.8px;top:379.65px;">ASSISTENTE DE FROTA IV - 44HS</span>
<div class="gi" style="left:252.8px;top:394.02px;width:10.7px;height:17.07px;"></div>
<div class="gr" style="left:263.5px;top:394.02px;width:689.8px;height:17.07px;"></div>
<div style="left:321.2px;top:394.02px;width:1px;height:17.07px;background:#ececdc"></div>
<div style="left:408.2px;top:394.02px;width:1px;height:17.07px;background:#ececdc"></div>
<div style="left:494.5px;top:394.02px;width:1px;height:17.07px;background:#ececdc"></div>
<span class="t ms" style="left:267.3px;top:396.72px;color:#3c3c3c">36123</span>
<div class="clip" style="left:411px;top:394.02px;width:83.5px;height:17.07px;"><span class="t ms nv" style="left:1px;top:2.7px">CAROLINY DE LIMA</span></div>
<span class="t ms nv" style="left:498.8px;top:396.72px;">ASSISTENTE DE RETENCAO II - 36HS</span>
<div class="gi" style="left:252.8px;top:411.09px;width:10.7px;height:17.07px;"></div>
<div class="gr" style="left:263.5px;top:411.09px;width:689.8px;height:17.07px;"></div>
<div style="left:321.2px;top:411.09px;width:1px;height:17.07px;background:#ececdc"></div>
<div style="left:408.2px;top:411.09px;width:1px;height:17.07px;background:#ececdc"></div>
<div style="left:494.5px;top:411.09px;width:1px;height:17.07px;background:#ececdc"></div>
<span class="t ms" style="left:267.3px;top:413.79px;color:#3c3c3c">54627</span>
<div class="clip" style="left:411px;top:411.09px;width:83.5px;height:17.07px;"><span class="t ms nv" style="left:1px;top:2.7px">JOSÉ EDUARDO</span></div>
<span class="t ms nv" style="left:498.8px;top:413.79px;">ATENDENTE I</span>
<div class="gi" style="left:252.8px;top:428.16px;width:10.7px;height:17.07px;"></div>
<div class="gr" style="left:263.5px;top:428.16px;width:689.8px;height:17.07px;"></div>
<div style="left:321.2px;top:428.16px;width:1px;height:17.07px;background:#ececdc"></div>
<div style="left:408.2px;top:428.16px;width:1px;height:17.07px;background:#ececdc"></div>
<div style="left:494.5px;top:428.16px;width:1px;height:17.07px;background:#ececdc"></div>
<span class="t ms" style="left:267.3px;top:430.86px;color:#3c3c3c">39963</span>
<div class="clip" style="left:411px;top:428.16px;width:83.5px;height:17.07px;"><span class="t ms nv" style="left:1px;top:2.7px">CAIO CARLONI NI</span></div>
<span class="t ms nv" style="left:498.8px;top:430.86px;">ATENDENTE I - 36HS</span>
<div class="gi" style="left:252.8px;top:445.23px;width:10.7px;height:17.07px;"></div>
<div class="gr" style="left:263.5px;top:445.23px;width:689.8px;height:17.07px;"></div>
<div style="left:321.2px;top:445.23px;width:1px;height:17.07px;background:#ececdc"></div>
<div style="left:408.2px;top:445.23px;width:1px;height:17.07px;background:#ececdc"></div>
<div style="left:494.5px;top:445.23px;width:1px;height:17.07px;background:#ececdc"></div>
<span class="t ms" style="left:267.3px;top:447.93px;color:#3c3c3c">58107</span>
<div class="clip" style="left:411px;top:445.23px;width:83.5px;height:17.07px;"><span class="t ms nv" style="left:1px;top:2.7px">KARINE RAFFAEL</span></div>
<span class="t ms nv" style="left:498.8px;top:447.93px;">ATENDENTE I - 36HS</span>
<div class="gi" style="left:252.8px;top:462.3px;width:10.7px;height:17.07px;"></div>
<div class="gr" style="left:263.5px;top:462.3px;width:689.8px;height:17.07px;"></div>
<div style="left:321.2px;top:462.3px;width:1px;height:17.07px;background:#ececdc"></div>
<div style="left:408.2px;top:462.3px;width:1px;height:17.07px;background:#ececdc"></div>
<div style="left:494.5px;top:462.3px;width:1px;height:17.07px;background:#ececdc"></div>
<span class="t ms" style="left:267.3px;top:465px;color:#3c3c3c">44180</span>
<div class="clip" style="left:411px;top:462.3px;width:83.5px;height:17.07px;"><span class="t ms nv" style="left:1px;top:2.7px">MARIANE FERNA</span></div>
<span class="t ms nv" style="left:498.8px;top:465px;">ATENDENTE I - 36HS</span>
<svg style="left:255.3px;top:295.3px;" width="6.5" height="9.5" viewBox="0 0 6.5 9.5"><path d="M1 0.800 L5.300 4.750 L1 8.700" fill="none" stroke="#000" stroke-width="1.900"/></svg>
<div class="sc" style="left:953.3px;top:273.8px;width:16.7px;height:219.8px;"></div>
<svg style="left:957.5px;top:279.3px;" width="8" height="5" viewBox="0 0 8 5"><path d="M0 4.500h8L4 0z" fill="#606060"/></svg>
<div class="sth" style="left:954px;top:346px;width:15.3px;height:14px;"></div>
<svg style="left:958.3px;top:349.5px;" width="7" height="7" viewBox="0 0 7 7"><path d="M0 .5h7M0 3.500h7M0 6.500h7" stroke="#9c988c" stroke-width="1"/></svg>
<svg style="left:957.5px;top:482.5px;" width="8" height="5" viewBox="0 0 8 5"><path d="M0 0h8L4 4.500z" fill="#555"/></svg>
<div class="sc" style="left:252.8px;top:493.6px;width:700.5px;height:16.4px;"></div>
<svg style="left:258.8px;top:498px;" width="5" height="8" viewBox="0 0 5 8"><path d="M4.500 0v8L0 4z" fill="#555"/></svg>
<div class="sth" style="left:269.4px;top:494.5px;width:15.2px;height:14.8px;"></div>
<svg style="left:273.5px;top:498.5px;" width="7" height="7" viewBox="0 0 7 7"><path d="M.5 0v7M3.500 0v7M6.500 0v7" stroke="#9c988c" stroke-width="1"/></svg>
<svg style="left:943px;top:498px;" width="5" height="8" viewBox="0 0 5 8"><path d="M0 0v8L4.500 4z" fill="#555"/></svg>
<div style="left:953.3px;top:493.6px;width:16.7px;height:16.4px;background:#e8e4d8"></div>
<div class="gb" style="left:524.3px;top:514.3px;width:165px;height:37.4px;"></div>
<div class="btn" style="left:532.3px;top:521.2px;width:70.4px;height:22.4px;"></div>
<svg style="left:550px;top:525.5px;" width="17" height="14" viewBox="0 0 17 14"><path d="M1 7.500l2.500-2 3 4L14.500.500l1.500 1.500L6.500 13.500z" fill="#1e8a1e" stroke="#0a4a0a" stroke-width=".6"/></svg>
<span class="t ms" style="left:569.3px;top:527.7px;">OK</span>
<div class="btn" style="left:609.3px;top:521.2px;width:70.7px;height:22.4px;"></div>
<svg style="left:616.5px;top:526px;" width="13" height="13" viewBox="0 0 13 13"><path d="M1.500 0L6.500 4.500 11 0l2 1.500L8.500 6.500 13 11.500l-2 1.500L6.500 8.500 2 13 0 11.500 4.500 6.500 0 1.500z" fill="#c01010" stroke="#600" stroke-width=".5"/></svg>
<span class="t ms" style="left:633.5px;top:527.7px;">Cancelar</span>
<div style="left:487.1px;top:270.3px;width:182.9px;height:219.7px;border:3px solid #0f80ff;border-radius:3px"></div>
</div>
<div id="st"><div class="sep"></div><span class="t sg">Suporte: +55 (021) 3335-9674 / 3335-9675 suportesinapse@sinapseinformatica.com.br</span></div>
<div id="bs" style="left:0;top:729px;width:1231px;height:7px;background:linear-gradient(#3a3a3a,#424242 1.5px,#424242 5.5px,#262626 6.2px)"></div>
<div id="bl" style="left:0;top:729px;width:45.5px;height:7px;background:#272727"></div>
<div id="rs1" style="left:1224.2px;top:0;width:7px;height:72px;background:#121812"></div>
<div id="rs2" style="left:1224.2px;top:72px;width:7px;height:64px;background:#000"></div>
<div id="rs3" style="left:1224.2px;top:136px;width:7px;height:40px;background:#343434"></div>
<div id="rs4" style="left:1224.2px;top:710.500px;width:7px;height:25px;background:#424242"></div>
</div>

</body></html>
